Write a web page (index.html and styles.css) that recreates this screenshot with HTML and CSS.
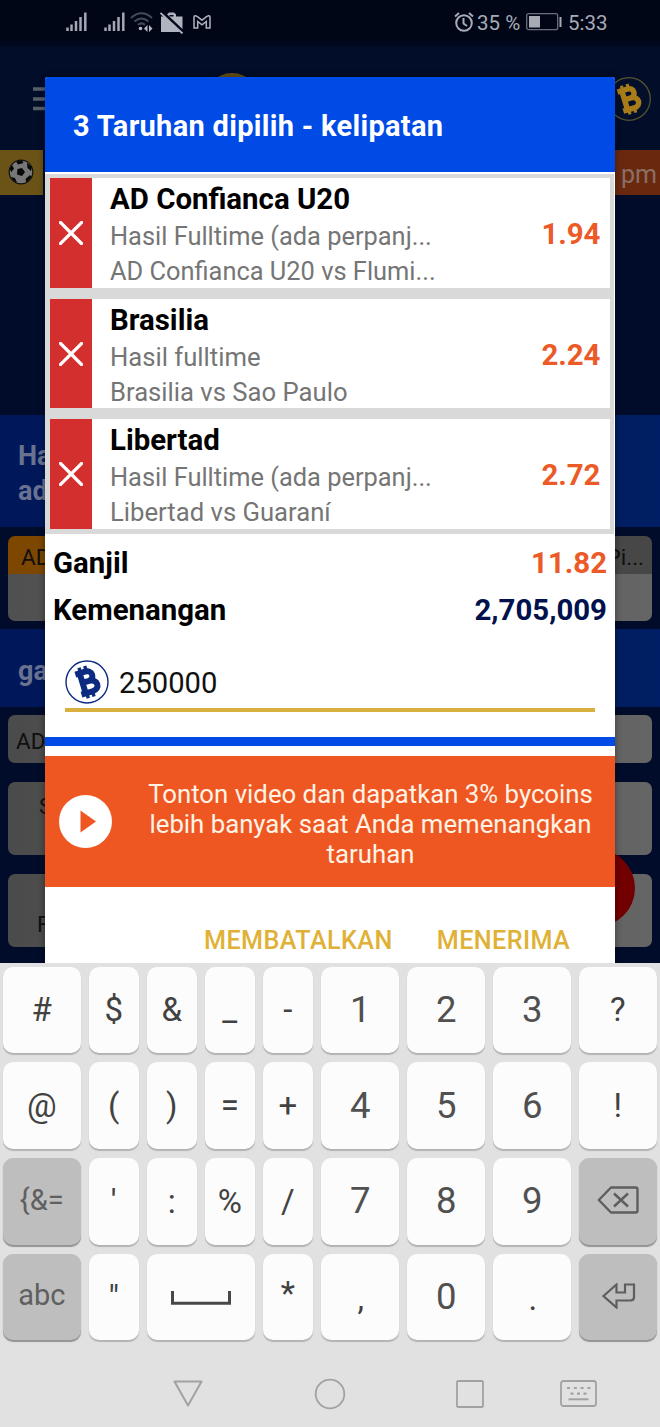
FILE: index.html
```html
<!DOCTYPE html>
<html lang="id">
<head>
<meta charset="utf-8">
<title>Taruhan</title>
<link rel="stylesheet" href="styles.css">
</head>
<body>
<svg width="0" height="0" class="defs">
  <symbol id="coin" viewBox="0 0 44 44">
    <circle cx="22" cy="22" r="21" fill="none" stroke="currentColor" stroke-width="1.4"/>
    <g transform="rotate(-17 22 22)" fill="none" stroke="currentColor" stroke-width="6" stroke-linejoin="round">
      <path d="M17.500 9.500V34.500M13 11.500H23C31 11.500 31 21.500 23.500 21.500H18M24 21.500C33.500 21.500 33.500 32.500 24.500 32.500H13"/>
      <path d="M18.500 6V11M24.500 6V11M18.500 33V38M24.500 33V38" stroke-width="3.400"/>
    </g>
  </symbol>
  <symbol id="cross" viewBox="0 0 24 24">
    <path d="M1.500 1.500L22.500 22.500M22.500 1.500L1.500 22.500" stroke="#fff" stroke-width="3.200" stroke-linecap="square"/>
  </symbol>
  <symbol id="signal" viewBox="0 0 21 20">
    <path d="M1.500 19V15.500M5.500 19V12.500M10 19V9M14.500 19V5M19.300 19V0.500" stroke="#a4a8b4" stroke-width="2.500"/>
  </symbol>
</svg>
<div class="screen">
  <div class="app">
    <header class="status">
      <svg class="sig1" width="21" height="20"><use href="#signal"/></svg>
      <svg class="sig2" width="21" height="20"><use href="#signal"/></svg>
      <svg class="wifi" width="23" height="20" viewBox="0 0 23 20" fill="none">
        <path d="M1 6Q11.500-3.500 22 6M4.500 9.500Q11.500 3.500 18.500 9.500M8 12.800Q11.500 10 15 12.800" stroke="#454b5d" stroke-width="2"/>
        <circle cx="10.500" cy="16.500" r="1.800" fill="#b5b8c2"/>
        <path d="M17.500 13V20L14 16.500ZM19 13V20L22.500 16.500Z" fill="#b5b8c2"/>
      </svg>
      <svg class="case" width="24" height="22" viewBox="0 0 24 22">
        <path d="M1 4.500H7V2.500L9 .5H14L16 2.500V4.500H22.500V20H1Z" fill="#b0b4be"/><path d="M9.500 4.500V3H13.500V4.500Z" fill="#01061a"/>
        <path d="M2 0L24 21" stroke="#01061a" stroke-width="3.500"/><path d="M.5 1L22.500 21.500" stroke="#b0b4be" stroke-width="1.800"/>
      </svg>
      <svg class="mail" width="18" height="14" viewBox="0 0 18 14" fill="none" stroke="#b0b4be" stroke-width="1.500">
        <path d="M1 13V2Q1 .7 2.500 .7Q3.500 .7 9 5.200Q14.500 .7 15.500 .7Q17 .7 17 2V13H13.300V6.500L9 9.800L4.700 6.500V13Z"/>
      </svg>
      <svg class="alarm" width="20" height="20" viewBox="0 0 20 20" fill="none" stroke="#a8abb6" stroke-width="2">
        <circle cx="10" cy="11" r="7.800"/><path d="M9.500 6V11.500L13 14M1 4.500L5 1M19 4.500L15 1"/>
      </svg>
      <span class="pct">35 %</span>
      <svg class="batt" width="36" height="18" viewBox="0 0 36 18">
        <rect x=".7" y=".7" width="31" height="16" rx="2" fill="none" stroke="#6b6f7b" stroke-width="1.300"/>
        <rect x="3" y="3" width="11" height="11.500" fill="#a8abb6"/><path d="M34.500 4V14" stroke="#a8abb6" stroke-width="2"/>
      </svg>
      <span class="clock">5:33</span>
    </header>
    <div class="toolbar">
      <svg class="menu" width="24" height="24" viewBox="0 0 24 24"><path d="M0 2H24M0 12H24M0 21.500H24" stroke="#595d68" stroke-width="3.500"/></svg>
      <svg class="logo" width="56" height="56"><circle cx="28" cy="28" r="28" fill="#664f13"/></svg>
      <svg class="wallet" width="44" height="44" viewBox="0 0 44 44"><circle cx="22" cy="22" r="21.300" fill="#04102b" stroke="#55522f" stroke-width="1.300"/>
        <g transform="rotate(-17 22 22)" fill="none" stroke="#a87d19" stroke-width="5.500" stroke-linejoin="round"><path d="M17.500 10V34M13 12H23C30.500 12 30.500 21.500 23.500 21.500H18M24 21.500C32.500 21.500 32.500 32 24.500 32H13"/><path d="M18.500 7V11M24.500 7V11M18.500 33V37M24.500 33V37" stroke-width="3.200"/></g>
      </svg>
    </div>
    <div class="sports">
      <div class="ball"><svg width="26" height="26" viewBox="0 0 26 26">
        <circle cx="13" cy="13" r="11.800" fill="#777" stroke="#111" stroke-width="1.200"/>
        <path d="M9.500 10L14 9L17 13L14 17L9 15.500ZM8 2.500L14 1.200L15.500 4L10 5.500ZM19 4L24 8L23 12L19.500 9ZM1.500 10L4 6L6 9.500L3.500 13ZM3 18L7 19L9 23.500L5.500 22ZM17.500 20L22 16L23.500 18L18.500 24Z" fill="#080808"/>
      </svg></div>
      <div class="time">pm</div>
    </div>
    <section class="market m1">Ha<br>ad</section>
    <div class="odds two"><span>AD</span><span class="pi">Pi...</span></div>
    <section class="market m2">ga</section>
    <div class="odds o2"><span>AD</span></div>
    <div class="odds o3"><span>S</span></div>
    <div class="odds o4"><span>F</span></div>
    <div class="fab"></div>
  </div>

  <main class="dialog">
    <h1>3 Taruhan dipilih - kelipatan</h1>
    <div class="list">
      <article class="bet"><button><svg width="24" height="24"><use href="#cross"/></svg></button><div class="info"><b>AD Confianca U20</b><span>Hasil Fulltime (ada perpanj...</span><span>AD Confianca U20 vs Flumi...</span></div><strong>1.94</strong></article>
      <article class="bet"><button><svg width="24" height="24"><use href="#cross"/></svg></button><div class="info"><b>Brasilia</b><span class="wide">Hasil fulltime</span><span class="wide">Brasilia vs Sao Paulo</span></div><strong>2.24</strong></article>
      <article class="bet"><button><svg width="24" height="24"><use href="#cross"/></svg></button><div class="info"><b>Libertad</b><span>Hasil Fulltime (ada perpanj...</span><span class="wide">Libertad vs Guaraní</span></div><strong>2.72</strong></article>
    </div>
    <div class="total"><b>Ganjil</b><b class="rate">11.82</b></div>
    <div class="total"><b>Kemenangan</b><b class="win">2,705,009</b></div>
    <div class="stake"><svg width="44" height="44"><use href="#coin"/></svg><span>250000</span></div>
    <div class="rule"></div>
    <div class="promo">
      <svg width="53" height="53" viewBox="0 0 53 53"><circle cx="26.500" cy="26.500" r="26.500" fill="#fff"/><path d="M21.500 15.500L37 26.500L21.500 37.500Z" fill="#ef5722"/></svg>
      <p>Tonton video dan dapatkan 3% bycoins<br>lebih banyak saat Anda memenangkan<br>taruhan</p>
    </div>
    <div class="actions"><span>MEMBATALKAN</span><span>MENERIMA</span></div>
  </main>

  <div class="keyboard">
    <div class="keys">
      <div>#</div><div>$</div><div>&amp;</div><div>_</div><div>-</div><div class="d">1</div><div class="d">2</div><div class="d">3</div><div>?</div>
      <div>@</div><div>(</div><div>)</div><div>=</div><div>+</div><div class="d">4</div><div class="d">5</div><div class="d">6</div><div>!</div>
      <div class="fn">{&amp;=</div><div>'</div><div>:</div><div>%</div><div>/</div><div class="d">7</div><div class="d">8</div><div class="d">9</div>
      <div class="fn"><svg width="42" height="28" viewBox="0 0 42 28" fill="none" stroke="#5e5e5e" stroke-width="2.400"><path d="M14 1.500H38.500Q40.500 1.500 40.500 3.500V24.500Q40.500 26.500 38.500 26.500H14L1.800 14Z" stroke-linejoin="round"/><path d="M17 7.500L31 20.500M31 7.500L17 20.500"/></svg></div>
      <div class="fn abc">abc</div><div>"</div>
      <div class="space"><svg width="60" height="14" viewBox="0 0 60 14"><path d="M1.500 0V12.200H58.500V0" fill="none" stroke="#484848" stroke-width="3"/></svg></div>
      <div class="star">*</div><div class="comma">,</div><div class="d">0</div><div class="comma">.</div>
      <div class="fn"><svg class="enter" width="34" height="26" viewBox="0 0 34 26" fill="none" stroke="#5e5e5e" stroke-width="2.200"><path d="M1.500 13L14.500 1.500V9.500H23V1.500H32V14Q32 17.500 28.500 17.500H14.500V24.500Z"/></svg></div>
    </div>
    <nav>
      <svg class="back" width="32" height="28" viewBox="0 0 32 28"><path d="M2.500 1.500H29.500L16 25.500Z" fill="none" stroke="#a2a2a2" stroke-width="2" stroke-linejoin="round"/></svg>
      <svg class="home" width="32" height="32"><circle cx="16" cy="16" r="14.300" fill="none" stroke="#a2a2a2" stroke-width="1.800"/></svg>
      <svg class="recent" width="28" height="28"><rect x="1" y="1" width="26" height="26" rx="1" fill="none" stroke="#a2a2a2" stroke-width="1.800"/></svg>
      <svg class="ime" width="37" height="27" viewBox="0 0 37 27" fill="none" stroke="#a2a2a2"><rect x="1" y="1" width="35" height="25" rx="2.500" stroke-width="1.800"/><path d="M7 8H31" stroke-width="2.200" stroke-dasharray="3 3.800"/><path d="M10.500 13.700H28" stroke-width="2.200" stroke-dasharray="3 3.500"/><path d="M8.500 19.300H28.500" stroke-width="2"/></svg>
    </nav>
  </div>
</div>
</body>
</html>
```
FILE: styles.css
```css
* { box-sizing: border-box; }
body { margin: 0; font-family: Roboto, "Noto Sans", sans-serif; background: #e1e1e1; }
svg { display: block; flex: none; }
.defs { position: absolute; }
.screen { position: relative; width: 660px; height: 1427px; overflow: hidden; }
.app { height: 963px; background: #010c2b; overflow: hidden; }
.app > * { white-space: nowrap; }

.status { height: 47px; display: flex; align-items: flex-start; background: linear-gradient(#010617 80%, #010a23); color: #a8abb6; font-size: 20.5px; line-height: 24px; }
.sig1 { margin: 12px 0 0 66px; }
.sig2 { margin: 12px 0 0 17px; }
.wifi { margin: 12px 0 0 5px; }
.case { margin: 12px 0 0 7px; }
.mail { margin: 15px 0 0 9px; }
.alarm { margin: 12px 0 0 243px; }
.pct { width: 46px; margin: 11px 0 0 3px; }
.batt { margin: 13px 0 0 3px; }
.clock { margin: 11px 0 0 6px; }

.toolbar { height: 103px; display: flex; align-items: flex-start; background: #010d29; }
.menu { margin: 40px 0 0 33px; }
.logo { margin: 26px 0 0 147px; }
.wallet { margin: 30px 0 0 347px; }

.sports { height: 45px; display: flex; justify-content: space-between; }
.ball { width: 43px; padding: 9px 0 0 8px; background: #6b5317; }
.time { width: 45px; padding: 9px 0 0 6px; background: #6a290f; color: #8b6f65; font-size: 25px; line-height: 32px; }

.market { background: linear-gradient(90deg, #001759, #001e63); color: #697391; font-weight: 700; font-size: 27px; line-height: 35px; padding-left: 18px; }
.m1 { margin-top: 220px; height: 112px; padding-top: 24px; }
.m2 { margin-top: 8px; height: 78px; padding-top: 25px; }
.odds { margin: 8px 8px 0; height: 48px; border-radius: 7px; background: linear-gradient(90deg, #4b4b4b, #656565); color: #101010; font-size: 22.5px; line-height: 26px; padding: 13px 8px 0; overflow: hidden; }
.two { margin-top: 9px; height: 85px; display: flex; justify-content: space-between; padding: 8px 8px 0 13px; background: linear-gradient(90deg, #7d4700 160px, #474747 160px) 0 0 / 100% 38px no-repeat, linear-gradient(90deg, #505050, #656565); }
.o3 { margin-top: 19px; height: 73px; padding: 11px 0 0 31px; }
.o4 { margin-top: 19px; height: 73px; padding: 37px 0 0 29px; }
.fab { position: absolute; left: 557px; top: 849px; width: 78px; height: 78px; border-radius: 50%; background: #720000; }

.dialog { position: absolute; left: 45px; top: 77px; width: 570px; height: 886px; background: #fff; border-radius: 3px 3px 0 0; overflow: hidden; box-shadow: 0 0 7px rgba(0,0,0,.4); white-space: nowrap; }
h1 { margin: 0; height: 95px; padding-left: 28px; background: #004ae6; color: #fff; font-size: 29px; letter-spacing: .3px; line-height: 98px; font-weight: 700; }
.list { margin-top: 1.5px; height: 360.5px; padding: 4.5px 2px 0 5px; margin-right: 1px; background: #d9d9d9; display: flex; flex-direction: column; gap: 11px; }
.bet { display: flex; height: 109.7px; background: #fff; margin-right: 2px; }
.bet button { width: 42px; flex: none; border: 0; padding: 0 0 0 9px; background: #d32f2f; }
.info { padding: 2px 0 0 18px; flex: 1; font-size: 25.4px; line-height: 35px; color: #757575; }
.info > * { display: block; }
.info .wide { font-size: 25.65px; }
.info b { font-size: 29.4px; line-height: 39px; color: #000; }
.bet strong { width: 68px; padding-right: 9.5px; font-size: 29.4px; line-height: 113px; color: #ec5a28; flex: none; display: flex; justify-content: flex-end; }
.total { display: flex; justify-content: space-between; padding: 0 8px; height: 47px; font-size: 29.4px; line-height: 59px; color: #000; }
.total .rate { color: #ec5a28; }
.total .win { color: #00114d; }
.stake { display: flex; margin: 32px 20px 0; height: 52px; border-bottom: 4px solid #d9b03e; font-size: 29.2px; line-height: 47px; gap: 10px; color: #0c2b80; }
.stake span { color: #111; }
.rule { height: 9px; margin-top: 25px; background: #004ae6; }
.promo { margin-top: 10px; height: 131px; background: #ef5722; color: #fff3e6; display: flex; padding: 0 0 0 14px; }
.promo svg { margin-top: 39px; }
.promo p { margin: 23px 22px 0 36px; flex: 1; text-align: center; font-size: 25.75px; line-height: 30px; }
.actions { display: flex; padding: 36px 0 0 159px; gap: 44px; color: #dfb136; font-weight: 500; font-size: 25.2px; letter-spacing: .4px; line-height: 35px; }

.keyboard { height: 464px; background: #e1e1e1; padding: 3.5px 2.5px 0; position: relative; }
.keys { display: grid; grid-template-columns: 78.5px repeat(4, 50.5px) repeat(4, 78.5px); grid-auto-rows: 86.5px; column-gap: 7.5px; row-gap: 9.3px; color: #424242; font-size: 33px; }
.keys div { background: #fcfcfc; border-radius: 10px; box-shadow: 0 1.5px 1px #b3b3b3; display: flex; align-items: center; justify-content: center; }
.keys .d { font-size: 36.5px; color: #505050; padding: 0 0 1px 1px; }
.keys .fn { background: #bebebe; color: #606060; font-size: 29px; box-shadow: 0 1.5px 1px #939393; padding-bottom: 3px; }
.keys .abc { padding-bottom: 5px; }
.keys .space { grid-column: span 2; padding-top: 2px; }
.keys .star { padding-bottom: 8px; }
.keys .comma { padding: 3px 0 0 2px; }
.enter { margin-left: 2px; }
nav { display: flex; align-items: center; padding-left: 169.5px; height: 107px; }
.home { margin-left: 110px; }
.recent { margin-left: 110px; }
.ime { margin-left: 75.5px; }
```
